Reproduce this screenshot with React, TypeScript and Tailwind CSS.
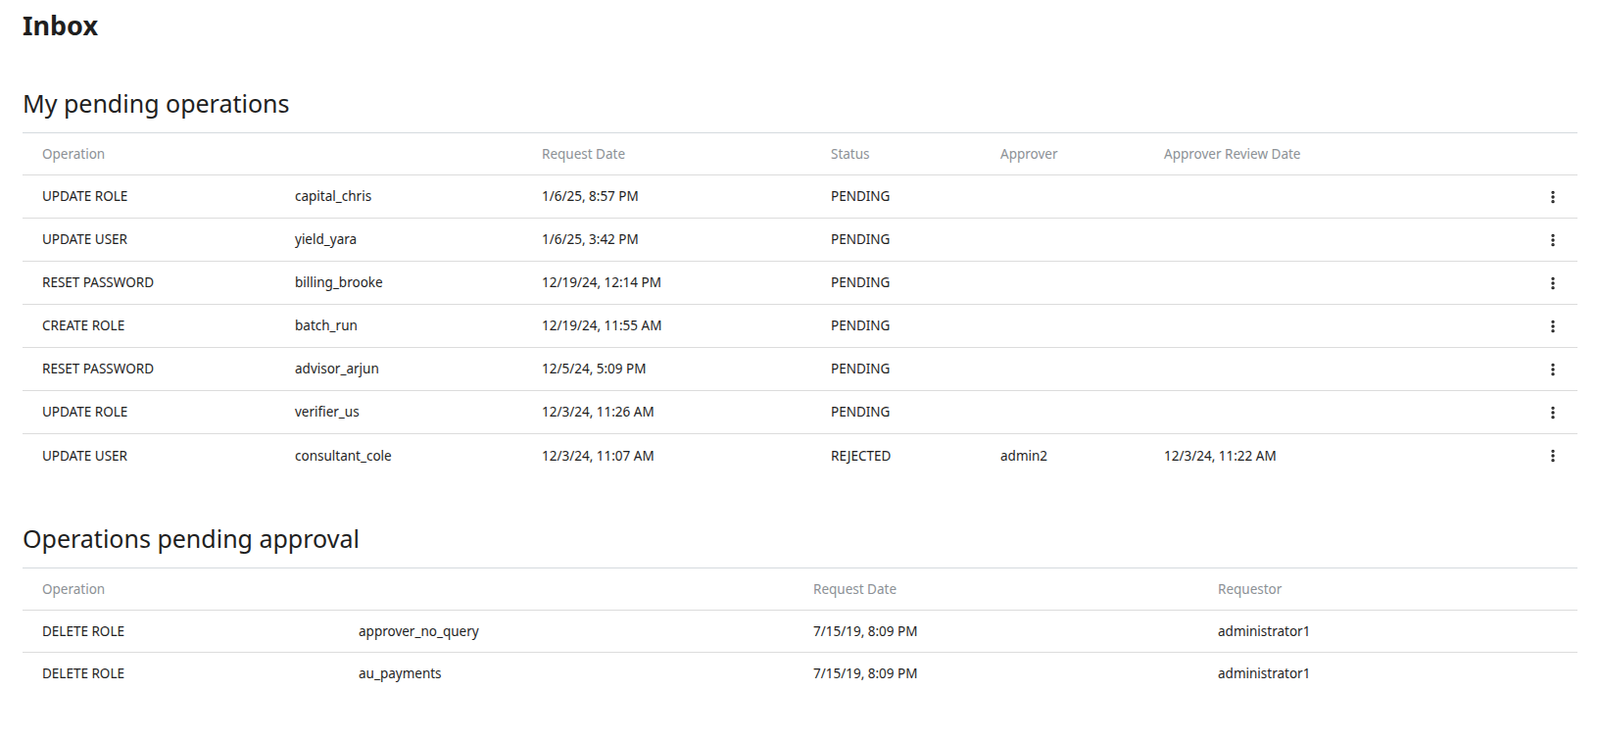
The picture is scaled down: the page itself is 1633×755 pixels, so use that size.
import { EllipsisVertical } from 'lucide-react'

const mine = [
  ['UPDATE ROLE', 'capital_chris', '1/6/25, 8:57 PM', 'PENDING', '', ''],
  ['UPDATE USER', 'yield_yara', '1/6/25, 3:42 PM', 'PENDING', '', ''],
  ['RESET PASSWORD', 'billing_brooke', '12/19/24, 12:14 PM', 'PENDING', '', ''],
  ['CREATE ROLE', 'batch_run', '12/19/24, 11:55 AM', 'PENDING', '', ''],
  ['RESET PASSWORD', 'advisor_arjun', '12/5/24, 5:09 PM', 'PENDING', '', ''],
  ['UPDATE ROLE', 'verifier_us', '12/3/24, 11:26 AM', 'PENDING', '', ''],
  ['UPDATE USER', 'consultant_cole', '12/3/24, 11:07 AM', 'REJECTED', 'admin2', '12/3/24, 11:22 AM'],
]

const approvals = [
  ['DELETE ROLE', 'approver_no_query', '7/15/19, 8:09 PM', 'administrator1'],
  ['DELETE ROLE', 'au_payments', '7/15/19, 8:09 PM', 'administrator1'],
]

const grid1 = 'grid grid-cols-[258px_252px_295px_173px_167px_1fr_50px] items-center pl-[20px]'
const grid2 = 'grid grid-cols-[323px_464px_413px_1fr] items-center pl-[20px]'

export default function App() {
  return (
    <div className="min-h-screen bg-white px-[23px] pt-[8px] text-[#1f1f1f] [font-family:'Open_Sans',sans-serif]">
      <h1 className="text-[27px] font-bold leading-[36px]">Inbox</h1>

      {/* my pending operations */}
      <h2 className="mt-[46px] text-[25px] leading-[30px]">My pending operations</h2>
      <div className="mt-[15px] border-t border-[#d5dade] text-[13.5px]">
        <div className={`${grid1} h-[43px] border-b border-[#dcdcdc] text-[#8c9196]`}>
          <span>Operation</span>
          <span></span>
          <span>Request Date</span>
          <span>Status</span>
          <span>Approver</span>
          <span>Approver Review Date</span>
          <span></span>
        </div>
        {mine.map((r, i) => (
          <div
            key={i}
            className={`${grid1} h-[44px] ${i < mine.length - 1 ? 'border-b border-[#dcdcdc]' : ''}`}
          >
            {r.map((c, j) => (
              <span key={j}>{c}</span>
            ))}
            <span className="flex justify-center">
              <EllipsisVertical className="h-4 w-4" strokeWidth={3} />
            </span>
          </div>
        ))}
      </div>

      {/* operations pending approval */}
      <h2 className="mt-[47px] text-[25px] leading-[30px]">Operations pending approval</h2>
      <div className="mt-[15px] border-t border-[#d5dade] text-[13.5px]">
        <div className={`${grid2} h-[43px] border-b border-[#dcdcdc] text-[#8c9196]`}>
          <span>Operation</span>
          <span></span>
          <span>Request Date</span>
          <span>Requestor</span>
        </div>
        {approvals.map((r, i) => (
          <div key={i} className={`${grid2} h-[43px] ${i === 0 ? 'border-b border-[#dcdcdc]' : ''}`}>
            {r.map((c, j) => (
              <span key={j}>{c}</span>
            ))}
          </div>
        ))}
      </div>
    </div>
  )
}
